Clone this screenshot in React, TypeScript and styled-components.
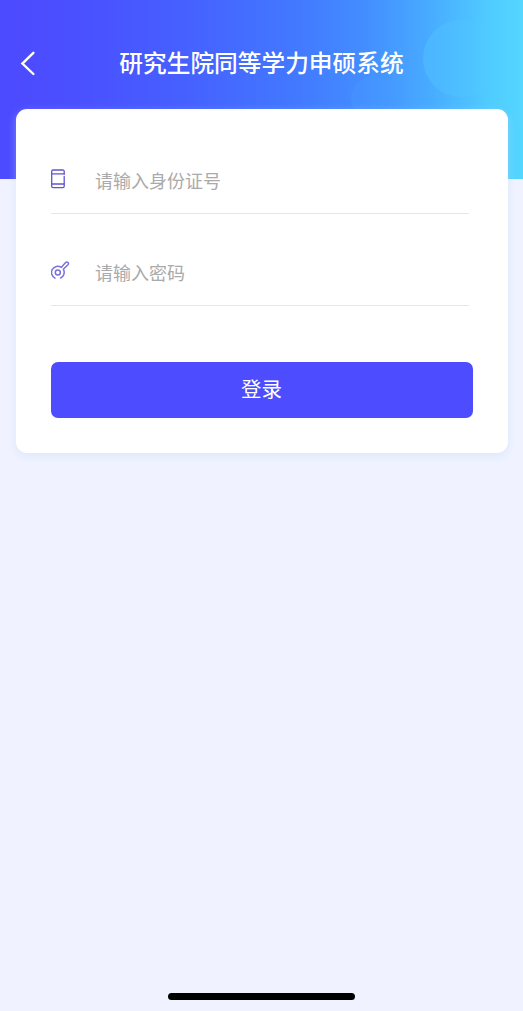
import React from 'react';
import styled, { createGlobalStyle } from 'styled-components';

const GlobalStyle = createGlobalStyle`
  * { box-sizing: border-box; }
  body {
    margin: 0;
    background: #f0f3ff;
    font-family: "Noto Sans CJK SC", sans-serif;
  }
`;

const Screen = styled.main`
  display: flex;
  flex-direction: column;
  width: 100%;
  height: 1011px;
  overflow: hidden;
  background: #f0f3ff;
`;

const Header = styled.header`
  position: relative;
  flex: none;
  height: 179px;
  padding: 38px 20px 0;
  overflow: hidden;
  background: linear-gradient(90deg, #4d4aff 0%, #4a50ff 15%, #4660ff 35%, #4278ff 56%, #438cff 69%, #48abff 82%, #50cdff 94%, #54d6ff 100%);
`;

const Bubble = styled.span<{ $x: number; $y: number; $size: number; $alpha: number }>`
  position: absolute;
  left: ${(p) => p.$x}px;
  top: ${(p) => p.$y}px;
  width: ${(p) => p.$size}px;
  height: ${(p) => p.$size}px;
  border-radius: 50%;
  background: linear-gradient(90deg, rgba(90, 220, 255, ${(p) => p.$alpha}), rgba(84, 214, 255, 0) 90%);
`;

const NavBar = styled.div`
  position: relative;
  display: grid;
  grid-template-columns: 20px 1fr 20px;
  align-items: center;
  height: 50px;
`;

const BackButton = styled.button`
  display: flex;
  padding: 0;
  border: 0;
  background: none;
`;

const Title = styled.h1`
  margin: 0;
  padding-bottom: 2px;
  color: #fff;
  font-size: 23.7px;
  font-weight: 500;
  line-height: 36px;
  text-align: center;
  white-space: nowrap;
`;

const Card = styled.form`
  position: relative;
  flex: none;
  display: flex;
  flex-direction: column;
  height: 343.5px;
  margin: -70px 15px 0 16px;
  padding: 40px 35px 35px;
  border-radius: 11px;
  background: #fff;
  box-shadow: 0 3px 9px rgba(195, 215, 248, 0.42);
`;

const Field = styled.label`
  display: flex;
  align-items: center;
  height: 65px;
  margin: 0 4px 27px 0;
  border-bottom: 1px solid #e6e6e6;
`;

const FieldIcon = styled.span`
  display: flex;
  width: 44px;
  padding-bottom: 4px;
`;

const Input = styled.input`
  flex: 1;
  min-width: 0;
  height: 32px;
  padding: 0 0 2px;
  border: 0;
  outline: 0;
  background: none;
  color: #333;
  font: 400 18px "Noto Sans CJK SC", sans-serif;
  &::placeholder { color: #aaa; opacity: 1; }
`;

const LoginButton = styled.button`
  height: 56px;
  margin-top: auto;
  padding: 0 1px 3px 0;
  border: 0;
  border-radius: 7px;
  background: #4d4dff;
  color: #fff;
  font: 400 20.5px "Noto Sans CJK SC", sans-serif;
`;

const HomeIndicator = styled.div`
  width: 187px;
  height: 7px;
  margin: auto auto 11px 168px;
  border-radius: 4px;
  background: #000;
`;

export default function App() {
  return (
    <>
      <GlobalStyle />
      <Screen>
        <Header>
          <Bubble $x={423} $y={20} $size={77} $alpha={0.25} />
          <Bubble $x={351} $y={76} $size={46} $alpha={0.08} />
          <NavBar>
            <BackButton type="button" aria-label="返回">
              <svg width="16" height="26" viewBox="0 0 16 26" fill="none" stroke="#fff" strokeWidth="2.4" strokeLinecap="round">
                <path d="M13.4 2.8 L2.4 13.6 L13.4 24" />
              </svg>
            </BackButton>
            <Title>研究生院同等学力申硕系统</Title>
          </NavBar>
        </Header>
        <Card>
          <Field>
            <FieldIcon>
              <svg width="20" height="20" viewBox="0 0 20 20" fill="none" stroke="#5f55cf" strokeWidth="1.3" strokeLinecap="round">
                <path d="M13.2 5.2 V2.4 Q13.2 1 11.8 1 H2.1 Q.7 1 .7 2.4 V17.3 Q.7 18.7 2.1 18.7 H11.8 Q13.2 18.7 13.2 17.3 V7.4" />
                <path d="M1 4.9 H13 M1 15 H13" />
              </svg>
            </FieldIcon>
            <Input type="text" placeholder="请输入身份证号" />
          </Field>
          <Field>
            <FieldIcon>
              <svg width="20" height="20" viewBox="0 0 20 20" fill="none" stroke="#7872d8" strokeWidth="1.5" strokeLinecap="round" strokeLinejoin="round">
                <path d="M4 17.1 A6.2 6.2 0 1 1 10.2 6.4 L14.6 1.6 Q15.8 .6 17 1.5 Q18 2.6 17 3.7 L12.3 8.2 A6.2 6.2 0 0 1 9.6 17" />
                <circle cx="6.8" cy="11.5" r="2.5" />
              </svg>
            </FieldIcon>
            <Input type="password" placeholder="请输入密码" />
          </Field>
          <LoginButton type="button">登录</LoginButton>
        </Card>
        <HomeIndicator />
      </Screen>
    </>
  );
}
